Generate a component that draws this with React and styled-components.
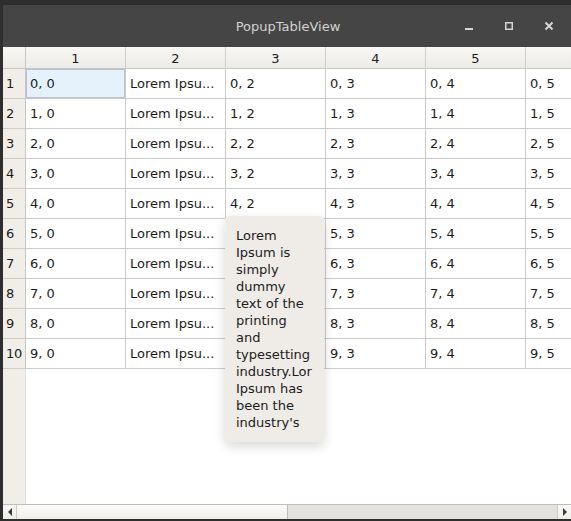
import React from 'react';
import styled, { createGlobalStyle } from 'styled-components';

const GlobalStyle = createGlobalStyle`
  html, body {
    margin: 0;
    padding: 0;
    background: #2e2e2e;
    overflow: hidden;
  }
  body {
    font-family: "DejaVu Sans", sans-serif;
  }
`;

const COLS = 7;
const ROWS = 10;
const COL_W = 100;
const ROW_H = 30;
const HEAD_W = 23;

const Desk = styled.div`
  width: 571px;
  height: 521px;
  padding: 5px 0 0 3px;
  box-sizing: border-box;
  background: #2e2e2e;
`;

const Window = styled.div`
  width: 568px;
  height: 514px;
  display: flex;
  flex-direction: column;
  background: #ffffff;
  overflow: hidden;
`;

const TitleBar = styled.div`
  height: 42px;
  flex: none;
  background: #454545;
  position: relative;
  display: flex;
  align-items: center;
  justify-content: center;
`;

const Title = styled.div`
  color: #d2d2d2;
  font-size: 13px;
  font-family: "DejaVu Sans", sans-serif;
  margin-left: 2px;
`;

const Controls = styled.div`
  position: absolute;
  right: 2px;
  top: 0;
  height: 100%;
  display: flex;
  align-items: center;
`;

const CtrlButton = styled.div`
  width: 40px;
  height: 42px;
  display: flex;
  align-items: center;
  justify-content: center;
`;

const TableArea = styled.div`
  flex: 1;
  position: relative;
  overflow: hidden;
  display: flex;
  flex-direction: column;
`;

const Grid = styled.div`
  display: grid;
  grid-template-columns: ${HEAD_W}px repeat(${COLS}, ${COL_W}px);
  grid-template-rows: 22px repeat(${ROWS}, ${ROW_H}px);
  width: max-content;
`;

const Corner = styled.div`
  background: linear-gradient(#f9f7f4, #ecebe7);
  border-right: 1px solid #c8c6c2;
  border-bottom: 1px solid #c8c6c2;
  box-sizing: border-box;
`;

const ColHead = styled.div`
  background: linear-gradient(#f9f7f4, #ecebe7);
  border-right: 1px solid #cfcdc9;
  border-bottom: 1px solid #c8c6c2;
  box-sizing: border-box;
  font-size: 13px;
  color: #1c1c1c;
  display: flex;
  align-items: center;
  justify-content: center;
  padding-top: 1px;
`;

const RowHead = styled.div`
  background: #f1eeea;
  border-right: 1px solid #c8c6c2;
  border-bottom: 1px solid #cfcdc9;
  box-sizing: border-box;
  font-size: 13px;
  color: #1c1c1c;
  display: flex;
  align-items: center;
  padding-left: 3px;
  letter-spacing: -0.3px;
`;

const Cell = styled.div`
  background: ${p => (p.$selected ? '#e6f2fb' : '#ffffff')};
  border-right: 1px solid #cbcbcb;
  border-bottom: 1px solid #cbcbcb;
  box-shadow: ${p => (p.$selected ? 'inset 0 0 0 1px #b7c4d0' : 'none')};
  box-sizing: border-box;
  font-size: 13px;
  color: #1c1c1c;
  display: flex;
  align-items: center;
  padding-left: 4px;
  white-space: nowrap;
  overflow: hidden;
`;

const Filler = styled.div`
  flex: 1;
  display: flex;
`;

const FillerHead = styled.div`
  width: ${HEAD_W}px;
  background: #f1eeea;
  border-right: 1px solid #e2dfdb;
  box-sizing: border-box;
`;

const Tooltip = styled.div`
  position: absolute;
  left: 222px;
  top: 169px;
  width: 99px;
  height: 226px;
  box-sizing: border-box;
  padding: 11px 10px 0 11px;
  background: #efebe7;
  border-radius: 4px;
  box-shadow: 0 4px 12px rgba(0, 0, 0, 0.16);
  font-size: 13px;
  line-height: 17px;
  color: #1c1c1c;
`;

const ScrollBar = styled.div`
  height: 14px;
  flex: none;
  display: flex;
  border-top: 1px solid #bebdb9;
  background: #e3e2de;
`;

const ArrowBtn = styled.div`
  width: 14px;
  flex: none;
  background: linear-gradient(#faf9f7, #efeeeb);
  border-right: ${p => (p.$left ? '1px solid #cfcdc9' : 'none')};
  border-left: ${p => (p.$left ? 'none' : '1px solid #cfcdc9')};
  box-sizing: border-box;
  display: flex;
  align-items: center;
  justify-content: center;
`;

const Thumb = styled.div`
  width: 270px;
  background: linear-gradient(#fcfbfa, #f1efec);
  border-right: 1px solid #bfbdb9;
`;

const Trough = styled.div`
  flex: 1;
`;

const lorem = (c) => (c === 1 ? 'Lorem Ipsu...' : null);

export default function App() {
  const cols = Array.from({ length: COLS }, (_, i) => i);
  const rows = Array.from({ length: ROWS }, (_, i) => i);
  return (
    <>
      <GlobalStyle />
      <Desk>
        <Window>
          <TitleBar>
            <Title>PopupTableView</Title>
            <Controls>
              <CtrlButton>
                <svg width="10" height="10" viewBox="0 0 10 10">
                  <rect x="1" y="7" width="8" height="2" fill="#d6d6d6" />
                </svg>
              </CtrlButton>
              <CtrlButton>
                <svg width="10" height="10" viewBox="0 0 10 10">
                  <rect x="1.75" y="1.75" width="6.5" height="6.5" fill="none" stroke="#d6d6d6" strokeWidth="1.5" />
                </svg>
              </CtrlButton>
              <CtrlButton>
                <svg width="10" height="10" viewBox="0 0 10 10">
                  <path d="M1.5 1.5 L8.5 8.5 M8.5 1.5 L1.5 8.5" stroke="#d6d6d6" strokeWidth="2" />
                </svg>
              </CtrlButton>
            </Controls>
          </TitleBar>
          <TableArea>
            <Grid>
              <Corner />
              {cols.map(c => (
                <ColHead key={c}>{c < 5 ? c + 1 : ''}</ColHead>
              ))}
              {rows.map(r => (
                <React.Fragment key={r}>
                  <RowHead>{r + 1}</RowHead>
                  {cols.map(c => (
                    <Cell key={c} $selected={r === 0 && c === 0}>
                      {lorem(c) || `${r}, ${c}`}
                    </Cell>
                  ))}
                </React.Fragment>
              ))}
            </Grid>
            <Filler>
              <FillerHead />
            </Filler>
            <Tooltip>
              Lorem Ipsum is simply dummy text of the printing and typesetting industry.Lor Ipsum has been the industry's
            </Tooltip>
          </TableArea>
          <ScrollBar>
            <ArrowBtn $left>
              <svg width="6" height="8" viewBox="0 0 6 8">
                <path d="M5 0 L5 8 L1 4 Z" fill="#3a3a3a" />
              </svg>
            </ArrowBtn>
            <Thumb />
            <Trough />
            <ArrowBtn>
              <svg width="6" height="8" viewBox="0 0 6 8">
                <path d="M1 0 L1 8 L5 4 Z" fill="#3a3a3a" />
              </svg>
            </ArrowBtn>
          </ScrollBar>
        </Window>
      </Desk>
    </>
  );
}
